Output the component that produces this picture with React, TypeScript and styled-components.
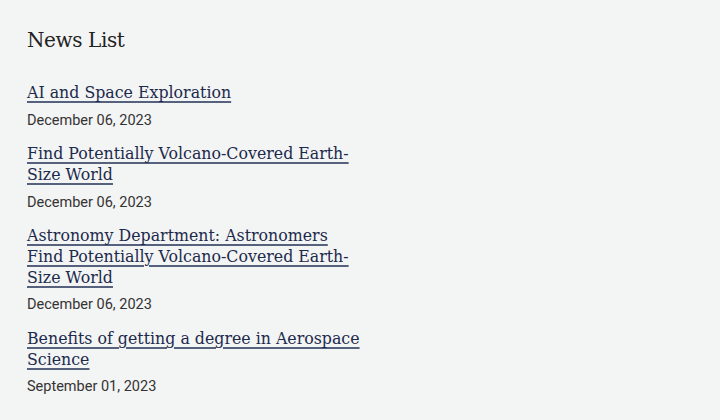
import styled, { createGlobalStyle } from 'styled-components';

const GlobalStyle = createGlobalStyle`
  html, body {
    margin: 0;
    padding: 0;
    background: #f3f4f4;
  }
`

type NewsItem = {
  title: string
  date: string
}

const news: NewsItem[] = [
  { title: 'AI and Space Exploration', date: 'December 06, 2023' },
  { title: 'Find Potentially Volcano-Covered Earth-Size World', date: 'December 06, 2023' },
  { title: 'Astronomy Department: Astronomers Find Potentially Volcano-Covered Earth-Size World', date: 'December 06, 2023' },
  { title: 'Benefits of getting a degree in Aerospace Science', date: 'September 01, 2023' },
]

const App = () => {
  return (
    <>
      <GlobalStyle />
      <Page>
        <Title>News List</Title>
        <List>
          {news.map(({ title, date }) => (
            <Item key={title}>
              <Link href="#">{title}</Link>
              <Date>{date}</Date>
            </Item>
          ))}
        </List>
      </Page>
    </>
  )
}

const Page = styled.main`
  padding: 26px 27px;
  width: 342px;
`

const Title = styled.h2`
  margin: 0 0 29px;
  font-family: "DejaVu Serif", serif;
  font-weight: 400;
  font-size: 20px;
  letter-spacing: -0.4px;
  line-height: 28px;
  color: #222;
`

const List = styled.div`
  display: flex;
  flex-direction: column;
  gap: 13.8px;
`

const Item = styled.div`
  display: flex;
  flex-direction: column;
`

const Link = styled.a`
  font-family: "DejaVu Serif", serif;
  font-size: 15.8px;
  line-height: 20.6px;
  color: #1c2a4c;
  text-decoration: underline;
  text-decoration-color: #56627d;
  text-decoration-thickness: 1.5px;
  text-underline-offset: 3px;
`

const Date = styled.span`
  margin-top: 7px;
  font-family: Roboto, "Liberation Sans", sans-serif;
  font-size: 14.5px;
  line-height: 20px;
  color: #333;
`

export default App
